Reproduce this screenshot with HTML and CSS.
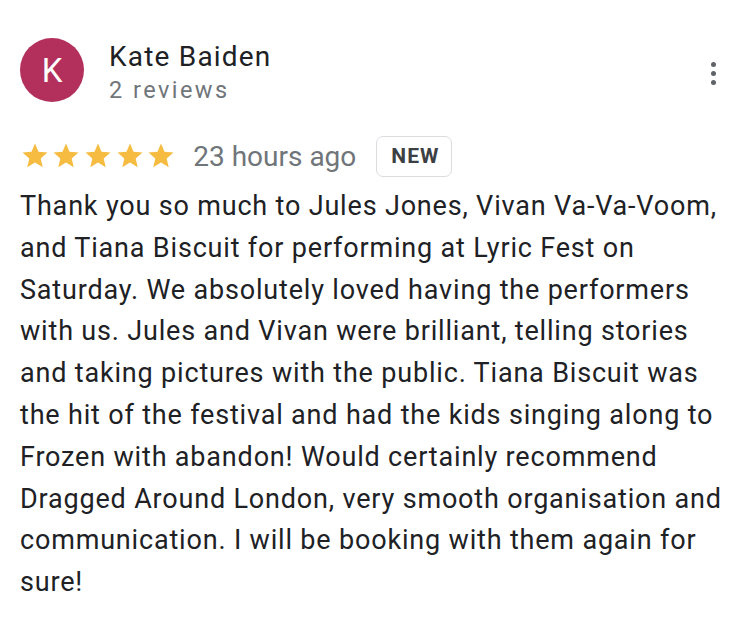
FILE: index.html
```html
<!DOCTYPE html>
<html lang="en">
<head>
    <meta charset="UTF-8">
    <meta name="viewport" content="width=device-width, initial-scale=1.0">
    <title>Review</title>
    <link rel="stylesheet" href="styles.css">
</head>
<body>
    <div class="review">
        <div class="review-header">
            <div class="avatar">K</div>
            <div class="author">
                <div class="author-name">Kate Baiden</div>
                <div class="author-meta">2 reviews</div>
            </div>
            <button class="menu" title="More">
                <span></span><span></span><span></span>
            </button>
        </div>

        <div class="rating-row">
            <div class="stars">
                <svg viewBox="0 0 24 24"><path d="M12 17.27L18.18 21l-1.64-7.03L22 9.24l-7.19-.61L12 2 9.19 8.63 2 9.24l5.46 4.73L5.82 21z"/></svg>
                <svg viewBox="0 0 24 24"><path d="M12 17.27L18.18 21l-1.64-7.03L22 9.24l-7.19-.61L12 2 9.19 8.63 2 9.24l5.46 4.73L5.82 21z"/></svg>
                <svg viewBox="0 0 24 24"><path d="M12 17.27L18.18 21l-1.64-7.03L22 9.24l-7.19-.61L12 2 9.19 8.63 2 9.24l5.46 4.73L5.82 21z"/></svg>
                <svg viewBox="0 0 24 24"><path d="M12 17.27L18.18 21l-1.64-7.03L22 9.24l-7.19-.61L12 2 9.19 8.63 2 9.24l5.46 4.73L5.82 21z"/></svg>
                <svg viewBox="0 0 24 24"><path d="M12 17.27L18.18 21l-1.64-7.03L22 9.24l-7.19-.61L12 2 9.19 8.63 2 9.24l5.46 4.73L5.82 21z"/></svg>
            </div>
            <span class="review-date">23 hours ago</span>
            <span class="badge">NEW</span>
        </div>

        <p class="review-text">Thank you so much to Jules Jones, Vivan Va-Va-Voom, and Tiana Biscuit for performing at Lyric Fest on Saturday. We absolutely loved having the performers with us. Jules and Vivan were brilliant, telling stories and taking pictures with the public. Tiana Biscuit was the hit of the festival and had the kids singing along to Frozen with abandon! Would certainly recommend Dragged Around London, very smooth organisation and communication. I will be booking with them again for sure!</p>
    </div>
</body>
</html>
```

FILE: styles.css
```css
body {
    margin: 0;
    background-color: #fff;
    font-family: Roboto, "Liberation Sans", Arial, sans-serif;
    color: #202124;
}
.review {
    padding: 38px 16px 0 20px;
}
.review-header {
    display: flex;
    align-items: flex-start;
}
.avatar {
    width: 64px;
    height: 64px;
    border-radius: 50%;
    background-color: #b2305b;
    color: #fff;
    font-size: 33px;
    display: flex;
    align-items: center;
    justify-content: center;
    flex-shrink: 0;
}
.author {
    margin-left: 25px;
    flex: 1;
}
.author-name {
    font-size: 28px;
    line-height: 34px;
    letter-spacing: 1.2px;
    margin-top: 2px;
}
.author-meta {
    font-size: 23.5px;
    line-height: 32.5px;
    letter-spacing: 2.45px;
    color: #70757a;
}
.menu {
    background: none;
    border: none;
    padding: 0;
    width: 20px;
    margin: 24px 9px 0 0;
    display: flex;
    flex-direction: column;
    align-items: center;
    gap: 4px;
    cursor: pointer;
}
.menu span {
    width: 5px;
    height: 5px;
    border-radius: 50%;
    background-color: #5f6368;
}
.rating-row {
    display: flex;
    align-items: center;
    margin-top: 28.5px;
    height: 42px;
}
.stars {
    display: flex;
    gap: 1.7px;
    margin-left: -0.5px;
}
.stars svg {
    width: 30px;
    height: 30px;
    fill: #f5bc41;
}
.review-date {
    margin-left: 17px;
    font-size: 28px;
    color: #70757a;
}
.badge {
    margin-left: 20px;
    height: 39px;
    padding: 0 12px 0 14px;
    border: 1px solid #dadce0;
    border-radius: 7px;
    font-size: 21px;
    font-weight: 700;
    letter-spacing: 1px;
    color: #3c4043;
    display: flex;
    align-items: center;
}
.review-text {
    margin: 9px 0 0 0;
    font-size: 27px;
    line-height: 41.8px;
    letter-spacing: 0.82px;
    color: #202124;
}
```
